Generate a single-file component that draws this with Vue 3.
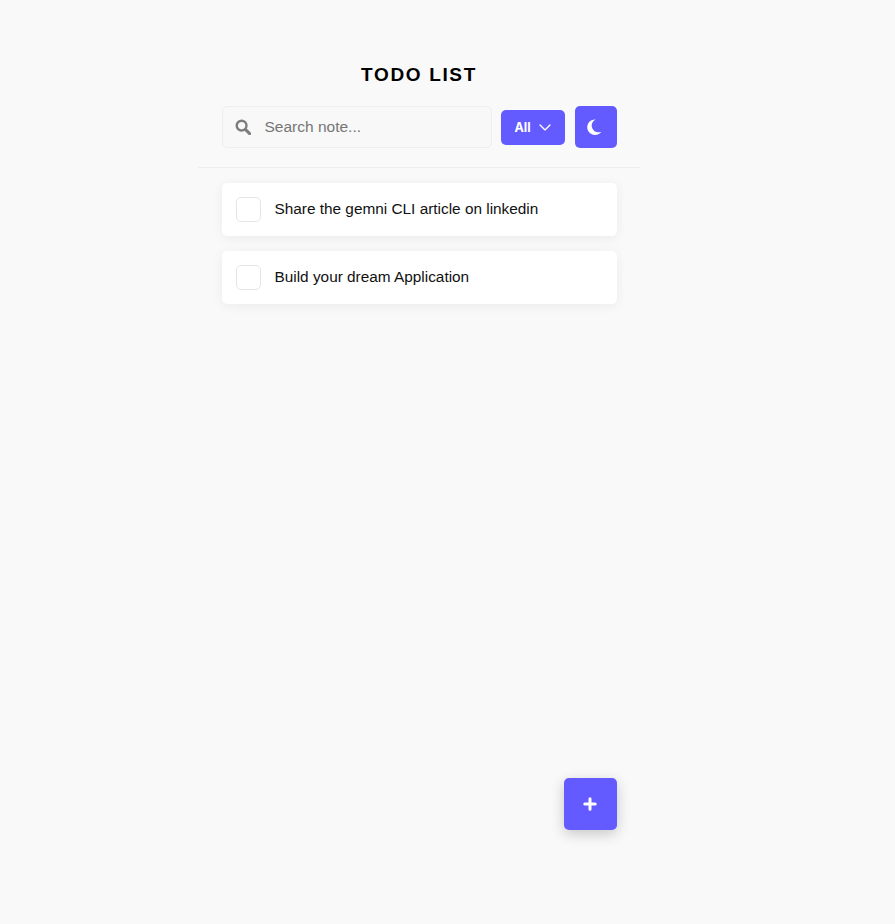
<script setup>
const todos = ['Share the gemni CLI article on linkedin', 'Build your dream Application']
</script>

<template>
  <main class="page">
    <div class="column">
      <h1 class="title">TODO LIST</h1>
      <div class="toolbar">
        <label class="search">
          <svg class="search-icon" viewBox="0 0 16 16" width="16" height="16" fill="none" stroke="#7d7d7d">
            <circle cx="6.6" cy="6.6" r="4.9" stroke-width="2.4" />
            <path d="M10.4 10.4 14.6 14.6" stroke-width="3" stroke-linecap="round" />
          </svg>
          <span class="placeholder">Search note...</span>
        </label>
        <button class="filter">
          <span>All</span>
          <svg viewBox="0 0 14 8" width="12" height="7" fill="none" stroke="#fff" stroke-width="1.6" stroke-linecap="round" stroke-linejoin="round">
            <path d="M1.2 1.2 7 6.8l5.8-5.6" />
          </svg>
        </button>
        <button class="theme">
          <svg viewBox="0 0 16 16" width="16" height="16" fill="#fff">
            <path d="M9.6.4a7.8 7.8 0 1 0 5.8 12.3 6.6 6.6 0 0 1-5.8-12.3Z" />
          </svg>
        </button>
      </div>
      <div class="divider"></div>
      <ul class="list">
        <li v-for="todo in todos" :key="todo" class="item">
          <span class="check"></span>
          <span class="label">{{ todo }}</span>
        </li>
      </ul>
    </div>
    <button class="add">
      <svg viewBox="0 0 14 14" width="14" height="14" fill="none" stroke="#fff" stroke-width="3" stroke-linecap="round">
        <path d="M7 1.8v10.4M1.8 7h10.4" />
      </svg>
    </button>
  </main>
</template>

<style>
html, body { margin: 0; background: #f9f9f9; }
</style>

<style scoped>
.page {
  position: relative;
  height: 924px;
  overflow: hidden;
  background: #f9f9f9;
  font-family: "Liberation Sans", Arial, sans-serif;
}
.column {
  width: 442px;
  margin-left: 198px;
  padding-top: 64px;
  display: flex;
  flex-direction: column;
  align-items: center;
}
.title {
  margin: 0;
  font-size: 19px;
  line-height: 22px;
  font-weight: 700;
  letter-spacing: 1.65px;
  color: #000;
}
.toolbar {
  width: 395px;
  margin-top: 20px;
  display: flex;
  align-items: center;
}
.search {
  box-sizing: border-box;
  width: 270px;
  height: 42px;
  display: flex;
  align-items: center;
  padding-left: 12px;
  gap: 14px;
  border: 1px solid #eeeeee;
  border-radius: 5px;
  background: #f8f8f8;
}
.placeholder { font-size: 15.5px; color: #757575; }
.filter, .theme, .add {
  border: 0;
  padding: 0;
  background: #635bff;
  color: #fff;
  display: flex;
  align-items: center;
  justify-content: center;
}
.filter {
  width: 64px;
  height: 35px;
  margin-left: 9px;
  gap: 8px;
  border-radius: 5px;
  font-family: Inter, sans-serif;
  font-size: 12.5px;
  font-weight: 700;
}
.theme {
  width: 42px;
  height: 42px;
  margin-left: 10px;
  padding-right: 3px;
  border-radius: 5px;
}
.divider {
  width: 100%;
  height: 1px;
  margin-top: 19px;
  background: #eeeeee;
}
.list {
  list-style: none;
  width: 395px;
  margin: 15px 0 0;
  padding: 0;
  display: flex;
  flex-direction: column;
  gap: 15px;
}
.item {
  box-sizing: border-box;
  height: 53px;
  display: flex;
  align-items: center;
  padding-left: 14px;
  gap: 14px;
  background: #fff;
  border-radius: 5px;
  box-shadow: 0 2px 12px rgba(0, 0, 0, 0.06);
}
.check {
  box-sizing: border-box;
  width: 25px;
  height: 25px;
  border: 1px solid #e6e6e6;
  border-radius: 5px;
  background: #fff;
}
.label { font-size: 15.36px; color: #111; padding-bottom: 2px; }
.add {
  position: absolute;
  left: 564px;
  top: 778px;
  width: 53px;
  height: 52px;
  padding-right: 1px;
  border-radius: 5px;
  box-shadow: 0 4px 14px rgba(0, 0, 0, 0.2);
}
</style>
